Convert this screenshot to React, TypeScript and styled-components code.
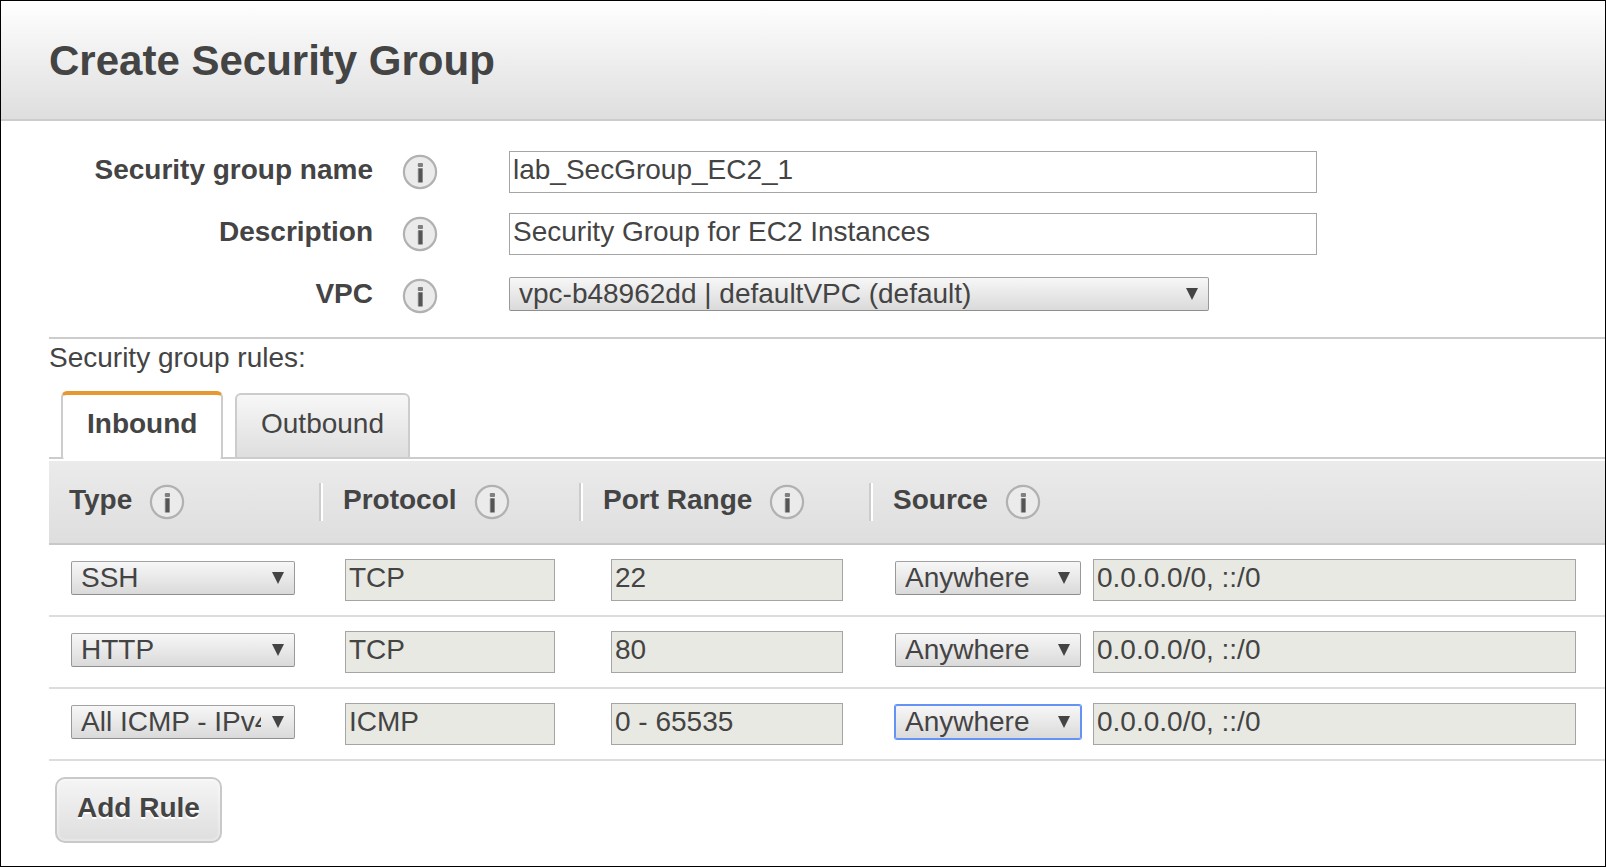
import React from 'react';
import styled, { createGlobalStyle } from 'styled-components';

const GlobalStyle = createGlobalStyle`
  *, *::before, *::after { box-sizing: border-box; }
  body {
    margin: 0;
    background: #fff;
    color: #444;
    font: 28px/32px "Liberation Sans", Arial, sans-serif;
  }
`;

const Dialog = styled.main`
  width: 1606px;
  height: 867px;
  border: 1px solid #000;
  background: #fff;
  overflow: hidden;
  white-space: nowrap;
`;

const Header = styled.header`
  height: 120px;
  padding: 36px 0 0 48px;
  border-bottom: 2px solid #ccc;
  background: linear-gradient(#fff, #dedede);
`;

const Title = styled.h1`
  margin: 0;
  font-size: 42px;
  line-height: 48px;
  font-weight: bold;
`;

const Form = styled.section`
  display: flex;
  flex-direction: column;
  gap: 20px;
  height: 216px;
  padding-top: 30px;
`;

const FormRow = styled.div`
  display: flex;
  align-items: flex-start;
  height: 42px;
`;

const Label = styled.div`
  width: 372px;
  padding-top: 3px;
  text-align: right;
  font-weight: bold;
`;

const IconCell = styled.div`
  width: 136px;
  padding: 3px 0 0 29px;
`;

const Icon = styled.svg`
  display: block;
  flex: none;
  width: 36px;
  height: 36px;
`;

const TextField = styled.div<{ $width: number; $disabled?: boolean }>`
  flex: none;
  width: ${(p) => p.$width}px;
  height: 42px;
  padding: 2px 3px;
  border: 1px solid #a5a5a5;
  background: ${(p) => (p.$disabled ? '#e8e9e2' : '#fff')};
`;

const SelectBox = styled.div<{ $width: number; $focused?: boolean }>`
  flex: none;
  display: flex;
  width: ${(p) => p.$width}px;
  height: 34px;
  margin-top: 2px;
  padding: 0 10px 0 9px;
  border: 1px solid;
  border-color: #a2a2a2 #999 #8e8e8e;
  border-radius: 2px;
  background: linear-gradient(#f7f7f7, #dadada);
  ${(p) => p.$focused && 'border-color: #6492f5; box-shadow: 0 0 0 1px #6492f5;'}
`;

const SelectValue = styled.span`
  flex: 1;
  min-width: 0;
  height: 32px;
  margin-right: 11px;
  overflow: hidden;
`;

const Arrow = styled.svg`
  flex: none;
  width: 12px;
  height: 12px;
  margin-top: 10px;
`;

const Rules = styled.section`
  margin-left: 48px;
  border-top: 2px solid #ccc;
`;

const RulesCaption = styled.div`
  height: 52px;
  padding-top: 3px;
`;

const Tabs = styled.div`
  display: flex;
  align-items: flex-end;
  gap: 12px;
  height: 68px;
  padding-left: 12px;
  background: linear-gradient(#ccc, #ccc) left bottom / 100% 2px no-repeat;
`;

const Tab = styled.div<{ $active?: boolean }>`
  width: ${(p) => (p.$active ? 162 : 175)}px;
  height: ${(p) => (p.$active ? 68 : 66)}px;
  padding: 13px 24px 0;
  border: 2px solid #ccc;
  border-radius: 6px 6px 0 0;
  background: linear-gradient(#f7f7f7, #dedede);
  ${(p) =>
    p.$active &&
    `border-top: 4px solid #e69930; border-bottom: 0; border-radius: 6px 6px 3px 3px; background: #fff; font-weight: bold;`}
`;

const HeadRow = styled.div`
  display: flex;
  height: 84px;
  margin-top: 2px;
  border-bottom: 2px solid #c8c8c8;
  background: linear-gradient(#ebebeb, #dedede);
`;

const HeadCell = styled.div<{ $width: number; $first?: boolean }>`
  display: flex;
  gap: 17px;
  width: ${(p) => p.$width}px;
  height: 38px;
  margin-top: 22px;
  padding: 1px 0 0 ${(p) => (p.$first ? 20 : 22)}px;
  font-weight: bold;
  ${(p) => !p.$first && 'border-left: 2px solid #ccc; box-shadow: inset 2px 0 #fff;'}
`;

const RuleRow = styled.div`
  display: flex;
  height: 72px;
  padding: 14px 0 0 22px;
  border-bottom: 2px solid #ddd;
`;

const Cell = styled.div<{ $width: number }>`
  flex: none;
  display: flex;
  gap: 12px;
  width: ${(p) => p.$width}px;
`;

const AddButton = styled.button`
  display: block;
  width: 167px;
  height: 66px;
  margin: 16px 0 0 6px;
  padding: 0 0 4px;
  border: 2px solid #c9c9c9;
  border-radius: 10px;
  background: linear-gradient(#f5f5f5, #dedede);
  box-shadow: inset 0 0 2px 2px rgba(255, 255, 255, 0.3);
  color: #444;
  font: bold 28px/32px "Liberation Sans", Arial, sans-serif;
  text-shadow: 0 2px #fff;
`;

const InfoIcon = () => (
  <Icon viewBox="0 0 36 36" aria-hidden="true">
    <circle cx="18" cy="18" r="16.1" fill="#ebebeb" stroke="#b1b1b1" strokeWidth="2.2" />
    <rect x="15.8" y="9" width="5.2" height="4" rx="1" fill="#808080" />
    <rect x="15.8" y="14.1" width="5.2" height="14.6" rx="1" fill="#8c8c8c" />
    <rect x="16.8" y="14.8" width="3.2" height="13.2" fill="#555" />
  </Icon>
);

interface SelectProps {
  value: string;
  width: number;
  focused?: boolean;
}

const Select = ({ value, width, focused }: SelectProps) => (
  <SelectBox $width={width} $focused={focused}>
    <SelectValue>{value}</SelectValue>
    <Arrow viewBox="0 0 12 12" aria-hidden="true">
      <path d="M0 0H12L6 12Z" fill="#444" />
    </Arrow>
  </SelectBox>
);

const rules = [
  { type: 'SSH', protocol: 'TCP', ports: '22' },
  { type: 'HTTP', protocol: 'TCP', ports: '80' },
  { type: 'All ICMP - IPv4', protocol: 'ICMP', ports: '0 - 65535', focused: true },
];

export default function App() {
  return (
    <>
      <GlobalStyle />
      <Dialog>
        <Header>
          <Title>Create Security Group</Title>
        </Header>
        <Form>
          <FormRow>
            <Label>Security group name</Label>
            <IconCell><InfoIcon /></IconCell>
            <TextField $width={808}>lab_SecGroup_EC2_1</TextField>
          </FormRow>
          <FormRow>
            <Label>Description</Label>
            <IconCell><InfoIcon /></IconCell>
            <TextField $width={808}>Security Group for EC2 Instances</TextField>
          </FormRow>
          <FormRow>
            <Label>VPC</Label>
            <IconCell><InfoIcon /></IconCell>
            <Select width={700} value="vpc-b48962dd | defaultVPC (default)" />
          </FormRow>
        </Form>
        <Rules>
          <RulesCaption>Security group rules:</RulesCaption>
          <Tabs>
            <Tab $active>Inbound</Tab>
            <Tab>Outbound</Tab>
          </Tabs>
          <HeadRow>
            <HeadCell $width={270} $first>Type<InfoIcon /></HeadCell>
            <HeadCell $width={260}>Protocol<InfoIcon /></HeadCell>
            <HeadCell $width={290}>Port Range<InfoIcon /></HeadCell>
            <HeadCell $width={736}>Source<InfoIcon /></HeadCell>
          </HeadRow>
          {rules.map((rule) => (
            <RuleRow key={rule.type}>
              <Cell $width={274}><Select width={224} value={rule.type} /></Cell>
              <Cell $width={266}><TextField $width={210} $disabled>{rule.protocol}</TextField></Cell>
              <Cell $width={284}><TextField $width={232} $disabled>{rule.ports}</TextField></Cell>
              <Cell $width={700}>
                <Select width={186} value="Anywhere" focused={rule.focused} />
                <TextField $width={483} $disabled>0.0.0.0/0, ::/0</TextField>
              </Cell>
            </RuleRow>
          ))}
          <AddButton type="button">Add Rule</AddButton>
        </Rules>
      </Dialog>
    </>
  );
}
